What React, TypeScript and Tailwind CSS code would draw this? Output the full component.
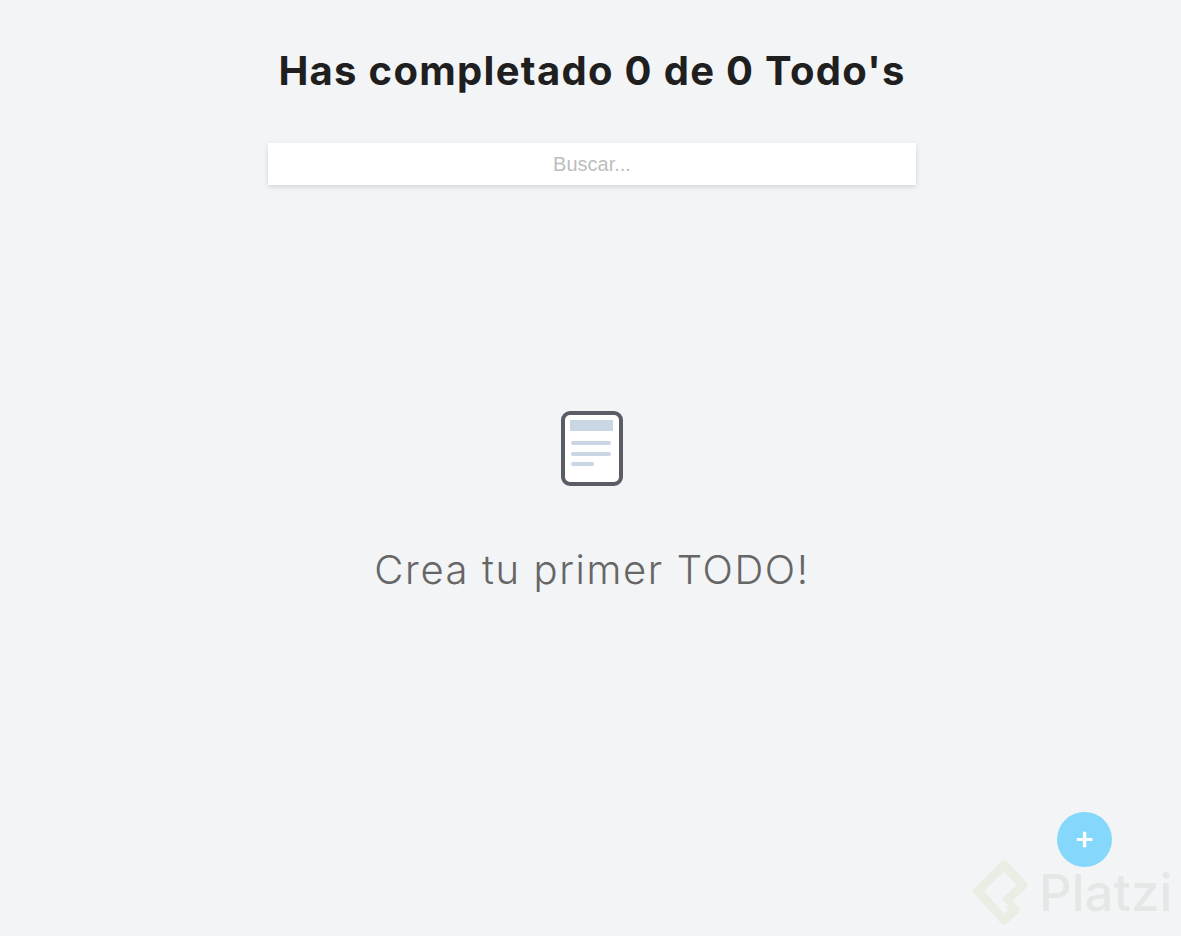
const PageIcon = () => (
  <svg width="64" height="78" viewBox="0 0 64 78" fill="none">
    <rect x="3" y="3" width="58" height="71" rx="7" fill="#ffffff" stroke="#5a5d66" strokeWidth="4" />
    <rect x="10" y="10" width="43" height="11" fill="#c9d6e3" />
    <rect x="11" y="31" width="40" height="4" rx="2" fill="#c9d6e3" />
    <rect x="11" y="42" width="40" height="4" rx="2" fill="#c9d6e3" />
    <rect x="11" y="52" width="23" height="4" rx="2" fill="#c9d6e3" />
  </svg>
)

const PlatziMark = () => (
  <svg width="56" height="66" viewBox="0 0 56 66" fill="none">
    <path
      d="M32 42 L50 25 L31 5 L5 31 L31 60 L42 50 L36 44"
      stroke="#e8eee3"
      strokeWidth="9"
      strokeLinejoin="round"
    />
  </svg>
)

export default function App() {
  return (
    <div className="relative h-[936px] overflow-hidden bg-[#f3f4f6] font-['Inter',sans-serif]">
      <div className="flex flex-col items-center pl-[3px]">
        <h1 className="mt-[46px] text-center text-[40px] leading-[50px] font-bold tracking-[1.3px] text-[#1f1f1f]">
          Has completado 0 de 0 Todo's
        </h1>

        <input
          placeholder="Buscar..."
          className="mt-[47px] h-[42px] w-[648px] bg-white text-center font-['Liberation_Sans',sans-serif] text-xl text-black shadow-[0_2px_5px_rgba(0,0,0,0.13)] outline-none placeholder:text-[#bdbdbd]"
        />

        <div className="mt-[225px] flex flex-col items-center">
          <PageIcon />
          <p className="mt-[57px] text-[40px] leading-[50px] font-light tracking-[1.6px] text-[#666666]">Crea tu primer TODO!</p>
        </div>
      </div>

      <button className="absolute top-[812px] left-[1057px] flex h-[55px] w-[55px] items-center justify-center rounded-full bg-[#85d8fb] pb-[3px] text-[32px] leading-none font-medium text-white">
        +
      </button>

      <div className="absolute top-[860px] left-[973px] flex items-center gap-[10px]">
        <PlatziMark />
        <span className="text-[51px] leading-[66px] font-medium text-[#e5e7e7]">Platzi</span>
      </div>
    </div>
  )
}
